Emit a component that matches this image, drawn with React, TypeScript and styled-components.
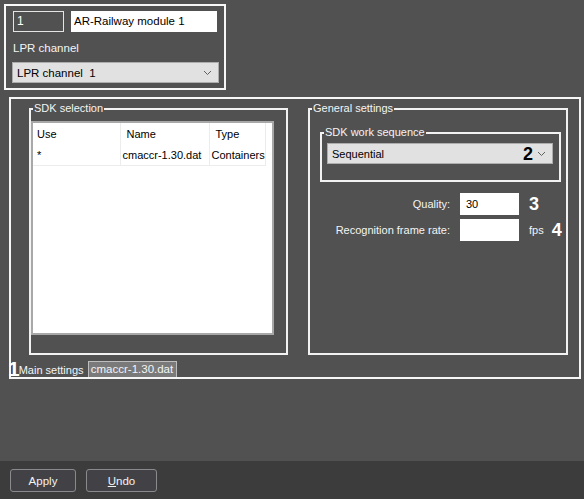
import styled, { createGlobalStyle } from "styled-components";

const GlobalStyle = createGlobalStyle`
  html, body {
    margin: 0;
    padding: 0;
    background: #3c3c3c;
  }
  body {
    font-family: "Liberation Sans", Arial, sans-serif;
    font-size: 11px;
    color: #f4f4f4;
  }
  * {
    box-sizing: border-box;
  }
`;

const Window = styled.div`
  width: 584px;
  height: 499px;
  display: flex;
  flex-direction: column;
  overflow: hidden;
`;

const Workspace = styled.div`
  flex: 1;
  background: #515151;
  padding: 4px 0 0 4px;
  display: flex;
  flex-direction: column;
  align-items: flex-start;
`;

const ObjectBox = styled.div`
  width: 222px;
  height: 86px;
  border: 2px solid #f6f6f6;
  padding: 5px 0 0 7px;
`;

const FieldRow = styled.div`
  display: flex;
  gap: 7px;
`;

const DarkField = styled.div`
  width: 51px;
  height: 21px;
  border: 1px solid #e4e4e4;
  padding: 3px 3px;
  line-height: 13px;
  font-size: 12px;
  color: #fff;
`;

const LightField = styled.div<{ $width: number }>`
  width: ${(p) => p.$width}px;
  height: 21px;
  background: #fff;
  color: #000;
  padding: 3px 3px;
  line-height: 14px;
  font-size: 11.5px;
`;

const FieldLabel = styled.div`
  line-height: 13px;
  margin: 10px 0 7px 0;
  font-size: 11.5px;
`;

const ComboBox = styled.div<{ $width: number }>`
  width: ${(p) => p.$width}px;
  height: 21px;
  background: #e1e1e1;
  border: 1px solid #adadad;
  color: #000;
  display: flex;
  align-items: center;
  padding: 0 6px 0 4px;
  gap: 4px;
`;

const ComboText = styled.span`
  flex: 1;
`;

const TopCombo = styled(ComboBox)`
  margin-left: -1px;
  font-size: 11.5px;
`;

const TabBox = styled.div`
  margin: 7px 0 0 5px;
  width: 572px;
  height: 282px;
  border: 2px solid #f6f6f6;
  display: flex;
  flex-direction: column;
`;

const Panels = styled.div`
  display: flex;
  gap: 20px;
  padding: 9px 0 0 18px;
`;

const Group = styled.div<{ $width: number; $height: number }>`
  position: relative;
  width: ${(p) => p.$width}px;
  height: ${(p) => p.$height}px;
  border: 2px solid #f2f2f2;
`;

const Legend = styled.span`
  position: absolute;
  top: -8px;
  left: 2px;
  padding: 0 1px;
  line-height: 13px;
  background: #515151;
  white-space: nowrap;
`;

const ListBox = styled.div`
  margin-top: 11px;
  width: 243px;
  height: 214px;
  background: #fff;
  border: 2px solid #a8a8a8;
`;

const Table = styled.table`
  border-collapse: collapse;
  color: #000;
  font-size: 11px;
`;

const HeadCell = styled.th<{ $width: number; $pad: number }>`
  width: ${(p) => p.$width}px;
  height: 22px;
  padding: 0 0 0 ${(p) => p.$pad}px;
  text-align: left;
  font-weight: normal;
  border-right: 1px solid #ececec;
`;

const Cell = styled.td<{ $pad: number }>`
  height: 20px;
  padding: 0 0 0 ${(p) => p.$pad}px;
  border-right: 1px solid #ececec;
  border-bottom: 1px solid #ececec;
  white-space: nowrap;
`;

const SequenceGroup = styled(Group)`
  margin: 22px 0 0 10px;
  padding: 9px 0 0 5px;
`;

const Marker = styled.span<{ $dark?: boolean }>`
  font-weight: bold;
  font-size: 18px;
  line-height: 16px;
  color: ${(p) => (p.$dark ? "#000" : "#fff")};
`;

const SettingsGrid = styled.div`
  display: grid;
  grid-template-columns: 130px 59px auto;
  column-gap: 10px;
  row-gap: 4px;
  margin: 11px 0 0 10px;
  align-items: center;
`;

const SettingLabel = styled.span`
  text-align: right;
`;

const SettingInput = styled.div`
  height: 22px;
  background: #fff;
  color: #000;
  padding: 4px 6px;
  line-height: 14px;
`;

const Suffix = styled.span`
  display: flex;
  align-items: center;
  gap: 8px;
`;

const TabStrip = styled.div`
  margin-top: 6px;
  height: 16px;
  display: flex;
  align-items: flex-end;
  margin-left: -3px;
`;

const TabNumber = styled(Marker)`
  font-size: 21px;
  line-height: 17px;
  letter-spacing: -1px;
`;

const TabLabel = styled.span`
  line-height: 14px;
  padding-right: 4px;
`;

const Tab = styled.span`
  width: 89px;
  height: 16px;
  background: #7a7a7a;
  border: 1px solid #bdbdbd;
  border-bottom: none;
  text-align: center;
  line-height: 15px;
  font-size: 11.5px;
`;

const BottomBar = styled.div`
  height: 38px;
  background: #3c3c3c;
  display: flex;
  gap: 10px;
  padding: 8px 0 0 10px;
`;

const Button = styled.button<{ $width: number }>`
  width: ${(p) => p.$width}px;
  height: 23px;
  background: #424246;
  border: 1px solid #8a8a8e;
  border-radius: 3px;
  color: #f2f2f2;
  font-family: "Liberation Sans", Arial, sans-serif;
  font-size: 11.5px;
  padding: 0;
`;

const Chevron = () => (
  <svg width="9" height="6" viewBox="0 0 9 6">
    <polyline points="1,1 4.5,4.5 8,1" fill="none" stroke="#606060" strokeWidth="1" />
  </svg>
);

export default function App() {
  return (
    <Window>
      <GlobalStyle />
      <Workspace>
        <ObjectBox>
          <FieldRow>
            <DarkField>1</DarkField>
            <LightField $width={146}>AR-Railway module 1</LightField>
          </FieldRow>
          <FieldLabel>LPR channel</FieldLabel>
          <TopCombo $width={207}>
            <ComboText>LPR channel&nbsp; 1</ComboText>
            <Chevron />
          </TopCombo>
        </ObjectBox>

        <TabBox>
          <Panels>
            <Group $width={259} $height={247}>
              <Legend>SDK selection</Legend>
              <ListBox>
                <Table>
                  <thead>
                    <tr>
                      <HeadCell $width={87} $pad={4}>Use</HeadCell>
                      <HeadCell $width={89} $pad={6}>Name</HeadCell>
                      <HeadCell $width={55} $pad={6}>Type</HeadCell>
                    </tr>
                  </thead>
                  <tbody>
                    <tr>
                      <Cell $pad={4}>*</Cell>
                      <Cell $pad={2}>cmaccr-1.30.dat</Cell>
                      <Cell $pad={2}>Containers</Cell>
                    </tr>
                  </tbody>
                </Table>
              </ListBox>
            </Group>

            <Group $width={260} $height={247}>
              <Legend>General settings</Legend>
              <SequenceGroup $width={241} $height={50}>
                <Legend>SDK work sequence</Legend>
                <ComboBox $width={226}>
                  <ComboText>Sequential</ComboText>
                  <Marker $dark>2</Marker>
                  <Chevron />
                </ComboBox>
              </SequenceGroup>
              <SettingsGrid>
                <SettingLabel>Quality:</SettingLabel>
                <SettingInput>30</SettingInput>
                <Suffix>
                  <Marker>3</Marker>
                </Suffix>
                <SettingLabel>Recognition frame rate:</SettingLabel>
                <SettingInput />
                <Suffix>
                  <span>fps</span>
                  <Marker>4</Marker>
                </Suffix>
              </SettingsGrid>
            </Group>
          </Panels>

          <TabStrip>
            <TabNumber>1</TabNumber>
            <TabLabel>Main settings</TabLabel>
            <Tab>cmaccr-1.30.dat</Tab>
          </TabStrip>
        </TabBox>
      </Workspace>

      <BottomBar>
        <Button $width={66}>Apply</Button>
        <Button $width={71}>
          <u>U</u>ndo
        </Button>
      </BottomBar>
    </Window>
  );
}
